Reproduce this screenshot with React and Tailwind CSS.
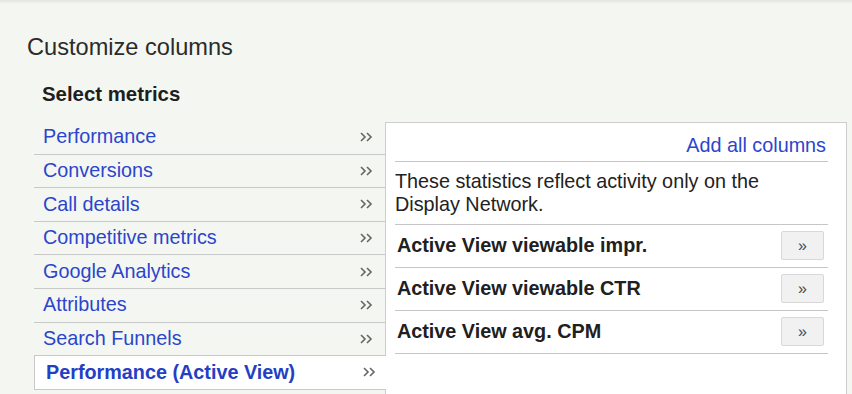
import React from "react";

const metrics = [
  "Performance",
  "Conversions",
  "Call details",
  "Competitive metrics",
  "Google Analytics",
  "Attributes",
  "Search Funnels",
];

const columns = [
  "Active View viewable impr.",
  "Active View viewable CTR",
  "Active View avg. CPM",
];

const Chevrons = () => (
  <svg width="13" height="10" viewBox="0 0 13 10" fill="none" stroke="#666" strokeWidth="1.6">
    <polyline points="1,1 5,5 1,9" />
    <polyline points="7,1 11,5 7,9" />
  </svg>
);

const App = () => {
  return (
    <div className="w-[852px] h-[394px] overflow-hidden bg-[#f4f7f1] font-['Liberation_Sans',Arial,sans-serif]">
      <div className="h-[4px] bg-gradient-to-b from-[#e2e5e0] to-[#f4f7f1]" />
      <h1 className="mt-[29px] ml-[27px] text-[23.6px] leading-[28px] text-[#2b2b2b]">
        Customize columns
      </h1>
      <h2 className="mt-[21px] ml-[42px] text-[20.4px] leading-[24px] font-bold text-[#1e1e1e]">
        Select metrics
      </h2>

      <div className="mt-[15px] flex">
        <ul className="ml-[34px] w-[351px] shrink-0">
          {metrics.map((m) => (
            <li
              key={m}
              className="h-[33.6px] flex items-center justify-between pl-[9px] pr-[12px] border-b border-[#c9c9c9] text-[19.8px] text-[#2b45cc]"
            >
              <span>{m}</span>
              <Chevrons />
            </li>
          ))}
          <li className="relative z-10 w-[352px] h-[33.6px] flex items-center justify-between pl-[11px] pr-[10px] bg-white border-l border-b border-[#c9c9c9] text-[19.8px] font-bold text-[#2340c4]">
            <span>Performance (Active View)</span>
            <Chevrons />
          </li>
        </ul>

        <div className="mt-px w-[462px] h-[300px] shrink-0 bg-white border border-[#cdcdcd] pl-[9px] pr-[18px]">
          <div className="pt-[11px] pb-[5px] pr-[2px] border-b border-[#c6c6c6] text-right text-[19.8px] leading-[22.4px] text-[#2b45cc]">
            Add all columns
          </div>
          <p className="pt-[7.5px] pb-[7px] pr-[40px] border-b border-[#c6c6c6] text-[19.8px] leading-[23.4px] text-[#222]">
            These statistics reflect activity only on the Display Network.
          </p>
          {columns.map((c) => (
            <div
              key={c}
              className="h-[43px] flex items-center justify-between pl-[2px] border-b border-[#c6c6c6]"
            >
              <span className="text-[19.8px] font-bold text-[#202020]">{c}</span>
              <button className="mr-[4px] w-[43px] h-[29px] flex items-center justify-center rounded-[2px] border border-[#d8d8d8] bg-[#f1f1f1] text-[16px] leading-none text-[#4a4a4a]">
                »
              </button>
            </div>
          ))}
        </div>
      </div>
    </div>
  );
};

export default App;
